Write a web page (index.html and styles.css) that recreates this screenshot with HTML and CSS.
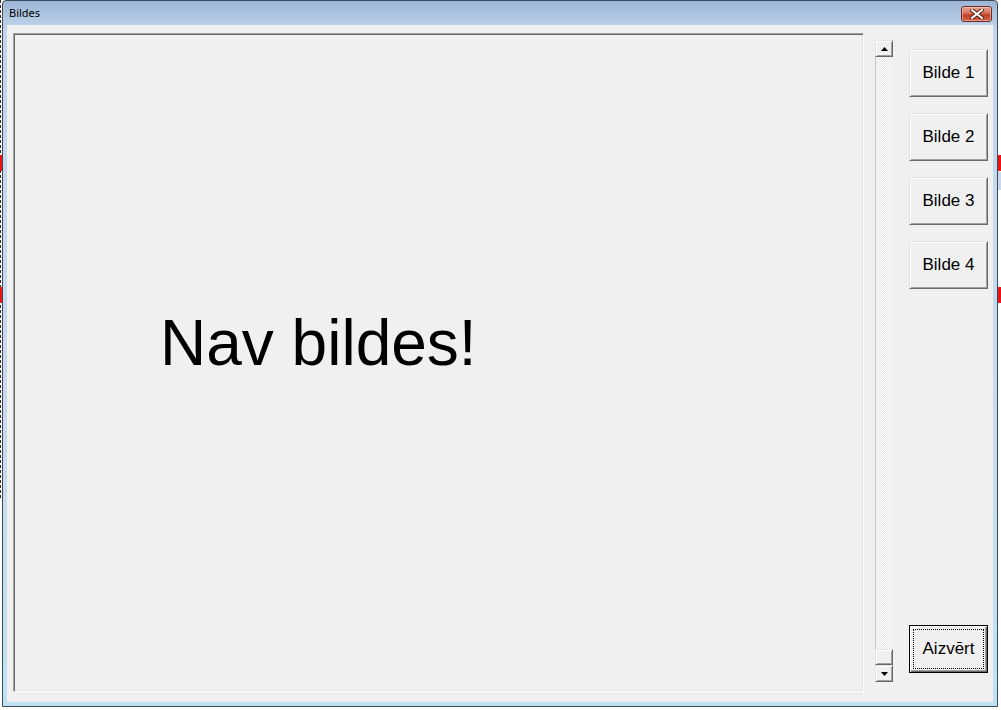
FILE: index.html
```html
<!DOCTYPE html>
<html lang="lv">
<head>
  <meta charset="UTF-8" />
  <title>Bildes</title>
  <link rel="stylesheet" href="styles.css">
</head>
<body>
  <div class="window">
    <div class="titlebar">
      <span class="title">Bildes</span>
      <button class="close" aria-label="Close">
        <svg width="14" height="10" viewBox="0 0 14 10">
          <path d="M2 1 L12 9 M12 1 L2 9" stroke="#5a1a10" stroke-width="4" stroke-linecap="square"/>
          <path d="M2 1 L12 9 M12 1 L2 9" stroke="#fff" stroke-width="2" stroke-linecap="square"/>
        </svg>
      </button>
    </div>

    <div class="client">
      <div class="picture">
        <div class="empty">Nav bildes!</div>
      </div>

      <div class="scrollbar">
        <div class="arrow">
          <svg width="7" height="4" viewBox="0 0 7 4"><path d="M3.5 0 L7 4 L0 4 Z" fill="#000"/></svg>
        </div>
        <div class="track"></div>
        <div class="thumb"></div>
        <div class="arrow">
          <svg width="7" height="4" viewBox="0 0 7 4"><path d="M0 0 L7 0 L3.5 4 Z" fill="#000"/></svg>
        </div>
      </div>

      <div class="buttons">
        <button class="btn">Bilde 1</button>
        <button class="btn">Bilde 2</button>
        <button class="btn">Bilde 3</button>
        <button class="btn">Bilde 4</button>
        <button class="btn default"><span class="focus">Aizvērt</span></button>
      </div>
    </div>
  </div>
</body>
</html>
```

FILE: styles.css
```css
* {
  box-sizing: border-box;
  margin: 0;
  padding: 0;
}

body {
  width: 1001px;
  height: 710px;
  overflow: hidden;
  padding-left: 2px;
  background-color: #fff;
  background-image:
    linear-gradient(#e11 0 0),
    linear-gradient(#e11 0 0),
    linear-gradient(#e11 0 0),
    linear-gradient(#e11 0 0),
    linear-gradient(#c9d8ea 0 0),
    repeating-linear-gradient(#3a2a1a 0 3px, #fff 3px 5px);
  background-size: 2px 16px, 2px 16px, 3px 16px, 3px 16px, 3px 18px, 1px 500px;
  background-position: 0 155px, 0 287px, 998px 155px, 998px 287px, 998px 172px, 0 0;
  background-repeat: no-repeat;
  font-family: "Liberation Sans", Arial, sans-serif;
}

.window {
  width: 996px;
  height: 707px;
  display: flex;
  flex-direction: column;
  border: 1px solid #3c4a5c;
  border-radius: 4px 4px 0 0;
  background: linear-gradient(#9db6d6, #c2d6ec 30px, #c9dcee 400px, #bfe2f2);
  padding: 0 4px 4px 4px;
}

.titlebar {
  height: 24px;
  display: flex;
  align-items: center;
  justify-content: space-between;
  margin: 0 -4px;
  padding: 0 5px 2px 6px;
}

.title {
  font-family: "Noto Sans", "DejaVu Sans", sans-serif;
  font-size: 11px;
  color: #000;
}

.close {
  width: 31px;
  height: 16px;
  margin-top: 3px;
  border: 1px solid #6e2a22;
  border-radius: 3px;
  background: linear-gradient(#e6a592, #d4705a 45%, #c2402a 55%, #d0604a);
  box-shadow: inset 0 0 0 1px rgba(255, 220, 210, 0.5);
  display: flex;
  align-items: center;
  justify-content: center;
}

.client {
  flex: 1;
  display: flex;
  align-items: flex-start;
  background: #f0f0f0;
  padding: 8px 5px 0 6px;
}

.picture {
  width: 851px;
  height: 659px;
  border: 1px solid;
  border-color: #a0a0a0 #fff #fff #a0a0a0;
  box-shadow: inset 1px 1px 0 #696969, inset -1px -1px 0 #e3e3e3;
  padding: 277px 0 0 146px;
}

.empty {
  font-size: 64px;
  line-height: 1;
  color: #000;
}

.scrollbar {
  width: 18px;
  height: 642px;
  margin: 7px 0 0 11px;
  display: flex;
  flex-direction: column;
}

.arrow {
  height: 17px;
  background: #f0f0f0;
  border: 1px solid;
  border-color: #e3e3e3 #696969 #696969 #e3e3e3;
  box-shadow: inset 1px 1px 0 #fff, inset -1px -1px 0 #a0a0a0;
  display: flex;
  align-items: center;
  justify-content: center;
}

.track {
  flex: 1;
  border-left: 1px solid #c8c8c8;
  background: repeating-conic-gradient(#fff 0 25%, #e6e6e6 0 50%) 0 0 / 2px 2px;
}

.thumb {
  height: 16px;
  background: #f0f0f0;
  border: 1px solid;
  border-color: #e3e3e3 #696969 #696969 #e3e3e3;
  box-shadow: inset 1px 1px 0 #fff, inset -1px -1px 0 #a0a0a0;
}

.buttons {
  width: 79px;
  height: 624px;
  margin: 16px 0 0 16px;
  display: flex;
  flex-direction: column;
  gap: 16px;
}

.btn {
  height: 48px;
  font-family: "Liberation Sans", Arial, sans-serif;
  font-size: 17px;
  color: #000;
  background: #f0f0f0;
  border: 1px solid;
  border-color: #e3e3e3 #696969 #696969 #e3e3e3;
  box-shadow: inset 1px 1px 0 #fff, inset -1px -1px 0 #a0a0a0;
}

.btn.default {
  margin-top: auto;
  border: 1px solid #000;
  box-shadow: inset 1px 1px 0 #fff, inset -1px -1px 0 #696969, inset -2px -2px 0 #a0a0a0;
  padding: 3px;
}

.focus {
  display: flex;
  align-items: center;
  justify-content: center;
  height: 100%;
  border: 1px dotted #000;
}
```
